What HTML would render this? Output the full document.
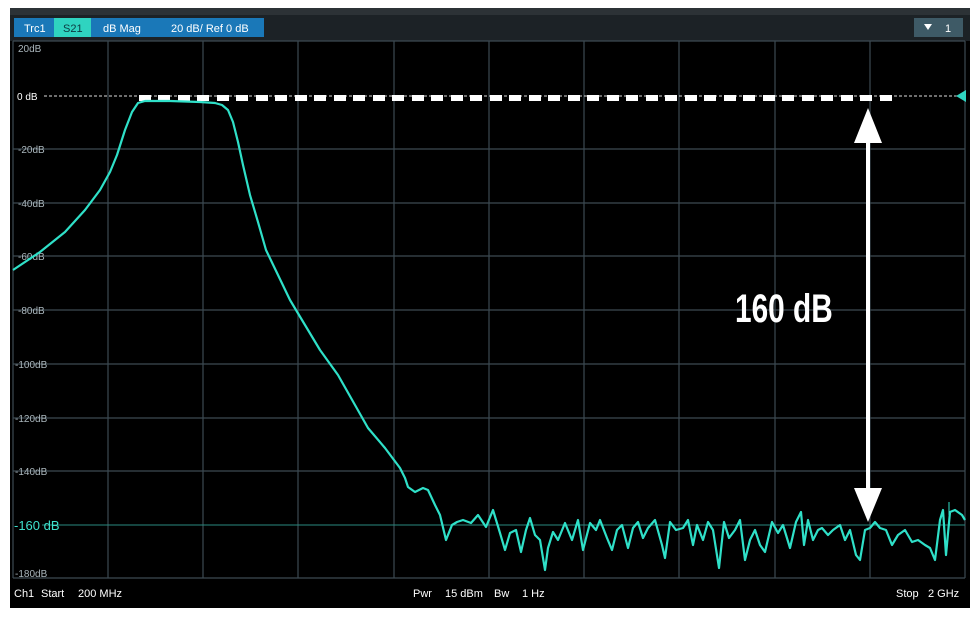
<!DOCTYPE html>
<html><head><meta charset="utf-8"><style>
html,body{margin:0;padding:0;background:#fff;width:980px;height:620px;overflow:hidden}
svg{display:block}
text{font-family:"Liberation Sans",sans-serif}
</style></head><body>
<svg width="980" height="620" xmlns="http://www.w3.org/2000/svg">
<rect x="0" y="0" width="980" height="620" fill="#fff"/>
<rect x="10" y="8" width="960" height="600" fill="#000"/>
<rect x="10" y="8" width="960" height="33" fill="#1c2226"/>
<rect x="10" y="8" width="960" height="7" fill="#2c3236"/>
<rect x="14" y="18" width="250" height="19" fill="#1a78b8"/>
<rect x="54" y="18" width="37" height="19" fill="#2fd4c0"/>
<text x="24" y="32" font-size="11" fill="#fff">Trc1</text>
<text x="63" y="32" font-size="11" fill="#0c3a40">S21</text>
<text x="103" y="32" font-size="11" fill="#fff">dB Mag</text>
<text x="171" y="32" font-size="11" fill="#fff">20 dB/ Ref 0 dB</text>
<rect x="914" y="18" width="49" height="19" fill="#3e5a66"/>
<polygon points="924,24 932,24 928,30" fill="#fff"/>
<text x="945" y="32" font-size="11" fill="#fff">1</text>
<rect x="10" y="579" width="960" height="28" fill="#000"/>
<g stroke="#3c4a52" stroke-width="1.2">
<line x1="13" y1="41" x2="965" y2="41"/>
<line x1="13" y1="149" x2="965" y2="149"/><line x1="13" y1="203" x2="965" y2="203"/>
<line x1="13" y1="256" x2="965" y2="256"/><line x1="13" y1="310" x2="965" y2="310"/>
<line x1="13" y1="364" x2="965" y2="364"/><line x1="13" y1="418" x2="965" y2="418"/>
<line x1="13" y1="471" x2="965" y2="471"/><line x1="13" y1="578" x2="965" y2="578"/>
<line x1="13" y1="41" x2="13" y2="578"/><line x1="108" y1="41" x2="108" y2="578"/>
<line x1="203" y1="41" x2="203" y2="578"/><line x1="298" y1="41" x2="298" y2="578"/>
<line x1="394" y1="41" x2="394" y2="578"/><line x1="489" y1="41" x2="489" y2="578"/>
<line x1="584" y1="41" x2="584" y2="578"/><line x1="679" y1="41" x2="679" y2="578"/>
<line x1="775" y1="41" x2="775" y2="578"/><line x1="870" y1="41" x2="870" y2="578"/>
<line x1="965" y1="41" x2="965" y2="578"/>
</g>
<line x1="42" y1="525" x2="965" y2="525" stroke="#2a8a80" stroke-width="1"/>
<line x1="44" y1="96" x2="958" y2="96" stroke="#ddd" stroke-width="1" stroke-dasharray="3,2"/>
<g fill="#aab6bc" font-size="10">
<text x="18" y="52">20dB</text>
<text x="18" y="153">-20dB</text><text x="18" y="207">-40dB</text><text x="18" y="260">-60dB</text>
<text x="18" y="314">-80dB</text><text x="15" y="368">-100dB</text><text x="15" y="422">-120dB</text>
<text x="15" y="475">-140dB</text><text x="15" y="577">-180dB</text>
</g>
<text x="17" y="100" font-size="10" fill="#fff">0 dB</text>
<text x="14" y="530" font-size="13" fill="#3ee0cc">-160 dB</text>
<polygon points="966,90 956,96 966,102" fill="#2fd4c0"/>
<g fill="#fff">
<rect x="139" y="95" width="12" height="6"/><rect x="158" y="95" width="12" height="6"/><rect x="178" y="95" width="12" height="6"/><rect x="197" y="95" width="12" height="6"/><rect x="217" y="95" width="12" height="6"/><rect x="236" y="95" width="12" height="6"/><rect x="256" y="95" width="12" height="6"/><rect x="275" y="95" width="12" height="6"/><rect x="295" y="95" width="12" height="6"/><rect x="314" y="95" width="12" height="6"/><rect x="334" y="95" width="12" height="6"/><rect x="353" y="95" width="12" height="6"/><rect x="373" y="95" width="12" height="6"/><rect x="392" y="95" width="12" height="6"/><rect x="412" y="95" width="12" height="6"/><rect x="431" y="95" width="12" height="6"/><rect x="451" y="95" width="12" height="6"/><rect x="470" y="95" width="12" height="6"/><rect x="490" y="95" width="12" height="6"/><rect x="509" y="95" width="12" height="6"/><rect x="529" y="95" width="12" height="6"/><rect x="548" y="95" width="12" height="6"/><rect x="568" y="95" width="12" height="6"/><rect x="587" y="95" width="12" height="6"/><rect x="607" y="95" width="12" height="6"/><rect x="626" y="95" width="12" height="6"/><rect x="646" y="95" width="12" height="6"/><rect x="665" y="95" width="12" height="6"/><rect x="685" y="95" width="12" height="6"/><rect x="704" y="95" width="12" height="6"/><rect x="724" y="95" width="12" height="6"/><rect x="743" y="95" width="12" height="6"/><rect x="763" y="95" width="12" height="6"/><rect x="782" y="95" width="12" height="6"/><rect x="802" y="95" width="12" height="6"/><rect x="821" y="95" width="12" height="6"/><rect x="841" y="95" width="12" height="6"/><rect x="860" y="95" width="12" height="6"/><rect x="880" y="95" width="12" height="6"/>
</g>
<polyline fill="none" stroke="#2fe0c8" stroke-width="2.2" stroke-linejoin="round" points="13,270 40,252 65,232 85,210 100,190 110,172 117,155 125,130 132,112 138,103 145,101 170,101 200,102 215,103 222,105 228,110 233,122 238,142 243,165 250,195 258,222 266,250 278,275 290,300 305,325 320,350 338,375 355,405 368,428 385,448 400,468 405,478 408,487 415,492 423,488 428,490 435,505 440,515 446,540 452,525 457,522 463,520 471,523 478,515 486,527 493,510 500,533 505,550 510,533 516,530 521,552 526,530 530,518 535,535 540,540 545,570 548,548 553,532 558,540 565,523 572,540 578,520 583,550 590,523 596,530 600,520 607,538 612,550 617,530 622,525 628,548 633,528 638,522 643,538 648,528 655,520 662,545 665,558 670,522 676,530 683,528 688,520 693,545 697,525 703,540 708,522 713,530 719,568 724,522 729,538 735,530 740,520 745,560 750,540 755,530 760,545 765,552 772,522 778,533 783,525 790,548 796,522 801,512 804,545 808,520 813,540 818,530 822,528 828,535 833,530 840,525 845,540 850,530 856,555 860,560 865,530 870,528 875,522 880,528 886,530 892,545 898,535 905,530 912,542 918,540 925,545 930,548 935,560 940,520 943,510 946,555 950,512 955,510 962,515 965,520"/>
<line x1="949" y1="502" x2="949" y2="515" stroke="#2fe0c8" stroke-width="1"/>
<line x1="868" y1="140" x2="868" y2="492" stroke="#fff" stroke-width="4"/>
<polygon points="868,108 882,143 854,143" fill="#fff"/>
<polygon points="868,522 882,488 854,488" fill="#fff"/>
<text x="0" y="0" font-size="40" font-weight="bold" fill="#fff" transform="translate(735,322) scale(0.745,1)">160 dB</text>
<g fill="#fff" font-size="11">
<text x="14" y="597">Ch1</text><text x="41" y="597">Start</text><text x="78" y="597">200 MHz</text>
<text x="413" y="597">Pwr</text><text x="445" y="597">15 dBm</text><text x="494" y="597">Bw</text><text x="522" y="597">1 Hz</text>
<text x="896" y="597">Stop</text><text x="928" y="597">2 GHz</text>
</g>
</svg>
</body></html>
